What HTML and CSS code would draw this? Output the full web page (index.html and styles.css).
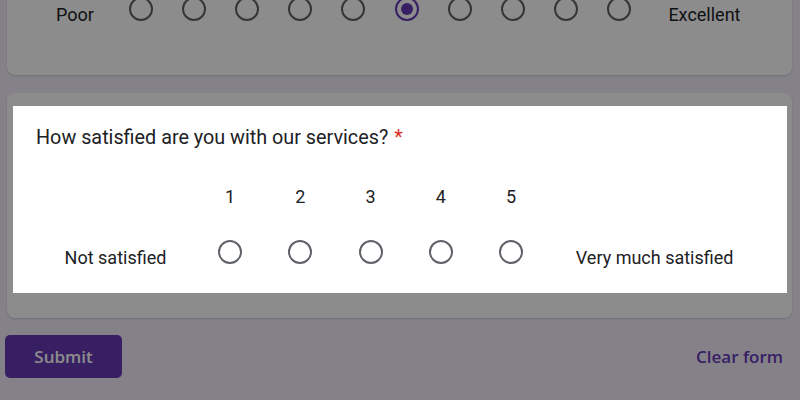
FILE: index.html
```html
<!DOCTYPE html>
<html lang="en">
<head>
<meta charset="utf-8">
<title>Feedback form</title>
<link rel="stylesheet" href="styles.css">
</head>
<body>
<main class="form">
  <section class="card card-first">
    <h2 class="question">How would you rate your overall experience? <span class="req">*</span></h2>
    <div class="scale scale-10">
      <span class="cell"></span>
      <span class="num">1</span><span class="num">2</span><span class="num">3</span><span class="num">4</span><span class="num">5</span>
      <span class="num">6</span><span class="num">7</span><span class="num">8</span><span class="num">9</span><span class="num">10</span>
      <span class="cell"></span>
      <span class="label">Poor</span>
      <span class="radio-cell"><span class="radio"></span></span>
      <span class="radio-cell"><span class="radio"></span></span>
      <span class="radio-cell"><span class="radio"></span></span>
      <span class="radio-cell"><span class="radio"></span></span>
      <span class="radio-cell"><span class="radio"></span></span>
      <span class="radio-cell"><span class="radio checked"></span></span>
      <span class="radio-cell"><span class="radio"></span></span>
      <span class="radio-cell"><span class="radio"></span></span>
      <span class="radio-cell"><span class="radio"></span></span>
      <span class="radio-cell"><span class="radio"></span></span>
      <span class="label">Excellent</span>
    </div>
  </section>

  <section class="card card-focus">
    <h2 class="question">How satisfied are you with our services? <span class="req">*</span></h2>
    <div class="scale scale-5">
      <span class="cell"></span>
      <span class="num">1</span><span class="num">2</span><span class="num">3</span><span class="num">4</span><span class="num">5</span>
      <span class="cell"></span>
      <span class="label">Not satisfied</span>
      <span class="radio-cell"><span class="radio"></span></span>
      <span class="radio-cell"><span class="radio"></span></span>
      <span class="radio-cell"><span class="radio"></span></span>
      <span class="radio-cell"><span class="radio"></span></span>
      <span class="radio-cell"><span class="radio"></span></span>
      <span class="label">Very much satisfied</span>
    </div>
    <div class="spotlight"></div>
  </section>

  <div class="actions">
    <button class="submit" type="button">Submit</button>
    <button class="clear" type="button">Clear form</button>
  </div>
</main>
</body>
</html>
```

FILE: styles.css
```css
html, body {
  margin: 0;
  padding: 0;
}
body {
  background: #f0ebf8;
  font-family: Roboto, "Liberation Sans", sans-serif;
  color: #202124;
  width: 800px;
  height: 400px;
  overflow: hidden;
}
.form {
  width: 785px;
  margin: -150px 0 0 7px;
  display: flex;
  flex-direction: column;
  gap: 18px;
}
.card {
  position: relative;
  background: #fff;
  border-radius: 8px;
  height: 225px;
  box-sizing: border-box;
  padding: 33px 29px 0;
  box-shadow: 0 1px 2px rgba(0,0,0,0.15);
}
.question {
  margin: 0;
  font-size: 19.8px;
  font-weight: 400;
  line-height: 24px;
}
.req {
  color: #d93025;
  margin-left: 1px;
}
.scale {
  display: grid;
  margin-top: 35px;
  grid-template-rows: 24px 48px;
  row-gap: 31px;
  font-size: 18px;
}
.scale-5 {
  grid-template-columns: 159px repeat(5, 70.25px) 1fr;
}
.scale-10 {
  grid-template-columns: 78px repeat(10, 53.2px) 1fr;
}
.num {
  text-align: center;
  line-height: 24px;
}
.label {
  text-align: center;
  line-height: 24px;
  padding-top: 6px;
}
.radio-cell {
  display: flex;
  justify-content: center;
  align-items: flex-start;
}
.radio {
  width: 24px;
  height: 24px;
  box-sizing: border-box;
  border: 2px solid #5f6368;
  border-radius: 50%;
  display: flex;
  align-items: center;
  justify-content: center;
}
.radio.checked {
  border-color: #673ab7;
}
.radio.checked::after {
  content: "";
  width: 12px;
  height: 12px;
  border-radius: 50%;
  background: #673ab7;
}
.spotlight {
  position: absolute;
  left: 6px;
  top: 13px;
  right: 5px;
  bottom: 25px;
  box-shadow: 0 0 0 2000px rgba(0, 0, 0, 0.45);
  pointer-events: none;
}
.actions {
  display: flex;
  justify-content: space-between;
  align-items: center;
  margin: -1px -2px 0 -2px;
}
.submit {
  width: 117px;
  height: 43px;
  border: none;
  border-radius: 5px;
  background: #673ab7;
  color: #fff;
  font-family: "Open Sans", Roboto, sans-serif;
  font-size: 17px;
  font-weight: 600;
}
.clear {
  border: none;
  background: transparent;
  color: #673ab7;
  font-family: "Open Sans", Roboto, sans-serif;
  font-size: 17px;
  font-weight: 600;
  padding: 0 11px;
  height: 43px;
}
```
